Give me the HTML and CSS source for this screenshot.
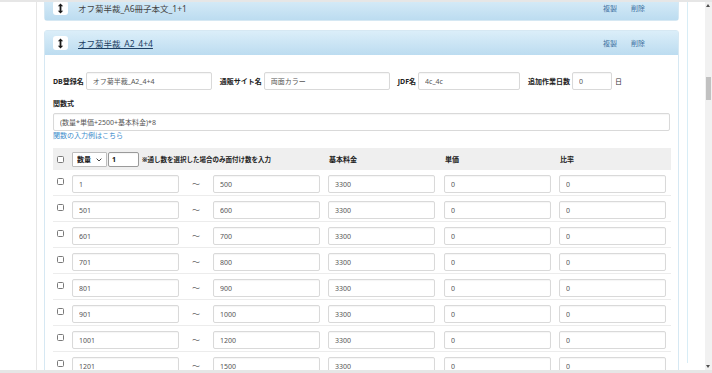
FILE: index.html
```html
<!DOCTYPE html>
<html lang="ja">
<head>
    <meta charset="UTF-8">
    <meta name="viewport" content="width=device-width, initial-scale=1.0">
    <title>面付け設定</title>
    <link rel="stylesheet" href="styles.css">
</head>
<body>
    <div class="frame">
        <div class="sidebar"></div>

        <div class="main">
            <div class="content">
                <!-- collapsed item -->
                <div class="panel">
                    <div class="panel-head">
                        <span class="drag-icon">
                            <svg width="7" height="11" viewBox="0 0 7 11"><path d="M3.5 0.5L0.8 3.2H2.6V7.8H0.8L3.5 10.5L6.2 7.8H4.4V3.2H6.2Z" fill="#1b1b1b"/></svg>
                        </span>
                        <span class="panel-title">オフ菊半裁_A6冊子本文_1+1</span>
                        <div class="panel-links">
                            <a href="#">複製</a>
                            <a href="#">削除</a>
                        </div>
                    </div>
                </div>

                <!-- open item -->
                <div class="panel">
                    <div class="panel-head">
                        <span class="drag-icon">
                            <svg width="7" height="11" viewBox="0 0 7 11"><path d="M3.5 0.5L0.8 3.2H2.6V7.8H0.8L3.5 10.5L6.2 7.8H4.4V3.2H6.2Z" fill="#1b1b1b"/></svg>
                        </span>
                        <a href="#" class="panel-title open">オフ菊半裁_A2_4+4</a>
                        <div class="panel-links">
                            <a href="#">複製</a>
                            <a href="#">削除</a>
                        </div>
                    </div>

                    <div class="panel-body">
                        <div class="field-row">
                            <label>DB登録名</label>
                            <input type="text" class="inp w-db" value="オフ菊半裁_A2_4+4">
                            <label>通販サイト名</label>
                            <input type="text" class="inp w-site" value="両面カラー">
                            <label>JDF名</label>
                            <input type="text" class="inp w-jdf" value="4c_4c">
                            <label>追加作業日数</label>
                            <input type="text" class="inp w-days" value="0">
                            <span class="unit">日</span>
                        </div>

                        <div class="formula">
                            <label>関数式</label>
                            <input type="text" class="inp w-full" value="(数量*単価+2500+基本料金)*8">
                            <a href="#" class="help-link">関数の入力例はこちら</a>
                        </div>

                        <div class="price-table">
                            <div class="t-head">
                                <div class="cell-check"><input type="checkbox" class="chk"></div>
                                <div class="head-tools">
                                    <span class="select-wrap">
                                        <select class="sel">
                                            <option>数量</option>
                                            <option>通し数</option>
                                        </select>
                                        <svg class="sel-arrow" width="6" height="4" viewBox="0 0 6 4"><path d="M0.6 0.6L3 3L5.4 0.6" fill="none" stroke="#444" stroke-width="1"/></svg>
                                    </span>
                                    <input type="text" class="inp small" value="1">
                                    <span class="note">※通し数を選択した場合のみ面付け数を入力</span>
                                </div>
                                <div class="col-label">基本料金</div>
                                <div class="col-label">単価</div>
                                <div class="col-label">比率</div>
                            </div>

                            <div id="rows"></div>
                        </div>
                    </div>
                </div>
            </div>
        </div>

        <div class="scrollbar">
            <span class="sb-up"></span>
            <span class="sb-thumb"></span>
            <span class="sb-down"></span>
        </div>
    </div>

    <script>
        // price ranges
        const ranges = [
            [1, 500], [501, 600], [601, 700], [701, 800],
            [801, 900], [901, 1000], [1001, 1200], [1201, 1500]
        ];

        const rows = document.getElementById('rows');
        ranges.forEach(function (r) {
            const row = document.createElement('div');
            row.className = 't-row';
            row.innerHTML =
                '<div class="cell-check"><input type="checkbox" class="chk"></div>' +
                '<input type="text" class="inp" value="' + r[0] + '">' +
                '<span class="tilde">～</span>' +
                '<input type="text" class="inp" value="' + r[1] + '">' +
                '<input type="text" class="inp num" value="3300">' +
                '<input type="text" class="inp num" value="0">' +
                '<input type="text" class="inp num" value="0">';
            rows.appendChild(row);
        });
    </script>
</body>
</html>
```

FILE: styles.css
```css
* {
    margin: 0;
    padding: 0;
    box-sizing: border-box;
}

body {
    font-family: "Noto Sans", "Noto Sans CJK JP", sans-serif;
    background: white;
    color: #333;
    overflow: hidden;
}

.frame {
    display: flex;
    width: 712px;
    height: 373px;
    border-top: 2px solid #e6e6e6;
    border-bottom: 3px solid #e6e6e6;
    overflow: hidden;
}

.sidebar {
    width: 37px;
    flex-shrink: 0;
    border-right: 1px solid #e6e6e6;
}

.main {
    flex: 1;
    overflow: hidden;
}

.content {
    width: 651px;
    height: 100%;
    margin-top: -7px;
    padding-left: 7px;
    border-right: 1px solid #d8edf6;
}

.panel {
    width: 635px;
    border: 1px solid #d6e8f3;
    border-radius: 3px;
    margin-bottom: 9px;
    background: white;
}

.panel-head {
    display: flex;
    align-items: center;
    height: 24px;
    padding-left: 8px;
    padding-right: 33px;
    background: linear-gradient(to bottom, #dbeef9 0%, #bcdcf0 100%);
}

.drag-icon {
    width: 15px;
    height: 14px;
    background: white;
    border-radius: 3px;
    display: flex;
    align-items: center;
    justify-content: center;
}

.panel-title {
    margin-left: 10px;
    font-size: 8.5px;
    color: #444;
}

.panel-title.open {
    color: #1d3f63;
    text-decoration: underline;
}

.panel-links {
    margin-left: auto;
    display: flex;
    gap: 14px;
}

.panel-links a {
    font-size: 7px;
    color: #3b6f9e;
    text-decoration: none;
}

.panel-body {
    padding: 17px 8px 0 8px;
}

.inp {
    height: 18px;
    border: 1px solid #d9d9d9;
    border-radius: 2px;
    box-shadow: inset 0 1px 1px rgba(0,0,0,0.04);
    padding: 0 6px;
    font-family: inherit;
    font-size: 7px;
    color: #555;
    -webkit-text-fill-color: #555;
    background: white;
    outline: none;
}

.field-row {
    display: flex;
    align-items: center;
}

.field-row label,
.formula label {
    font-size: 7px;
    font-weight: bold;
    color: #222;
    margin-right: 2px;
}

.field-row .inp {
    margin-right: 8px;
}

.w-db { width: 126px; }
.w-site { width: 126px; }
.w-jdf { width: 102px; }
.w-days { width: 40px; margin-right: 3px !important; }

.unit {
    font-size: 7px;
    color: #333;
}

.formula {
    margin-top: 9px;
    display: flex;
    flex-direction: column;
    align-items: flex-start;
}

.formula label {
    line-height: 9px;
    margin-bottom: 5px;
}

.w-full {
    width: 617px;
}

.help-link {
    font-size: 7px;
    line-height: 9px;
    color: #3d8ccc;
    text-decoration: none;
}

.price-table {
    margin-top: 8px;
    width: 618px;
}

.t-head,
.t-row {
    display: grid;
    grid-template-columns: 19px 107px 34px 107px 115px 116px 115px;
    align-items: center;
}

.t-head {
    height: 22px;
    background: #efefef;
}

.head-tools {
    grid-column: 2 / 5;
    display: flex;
    align-items: center;
}

.col-label {
    font-size: 7px;
    font-weight: bold;
    color: #222;
    padding-left: 9px;
}

.col-label:nth-child(4) {
    padding-left: 10px;
}

.cell-check {
    padding-left: 4px;
    display: flex;
}

.chk {
    appearance: none;
    width: 7px;
    height: 7px;
    border: 1px solid #7a7a7a;
    border-radius: 1.5px;
    background: white;
}

.select-wrap {
    position: relative;
    display: inline-flex;
}

.sel {
    appearance: none;
    width: 35px;
    height: 15px;
    border: 1px solid #bdbdbd;
    border-radius: 1px;
    background: white;
    font-family: inherit;
    font-size: 7px;
    font-weight: bold;
    color: #222;
    padding-left: 4px;
}

.sel-arrow {
    position: absolute;
    right: 5px;
    top: 6px;
}

.inp.small {
    width: 31px;
    height: 15px;
    margin-left: 1px;
    border-color: #9a9a9a;
    color: #111;
    -webkit-text-fill-color: #111;
    font-weight: bold;
    padding-left: 3px;
}

.note {
    font-size: 6.5px;
    font-weight: bold;
    color: #222;
    margin-left: 3px;
}

.t-row {
    height: 26px;
    border-bottom: 1px solid #ececec;
    align-items: start;
    padding-top: 5px;
}

.t-row .cell-check {
    padding-top: 3px;
}

.t-row .inp {
    width: 107px;
}

.t-row .inp.num {
    justify-self: end;
}

.tilde {
    font-size: 8px;
    color: #666;
    text-align: center;
    line-height: 18px;
}

.scrollbar {
    width: 7px;
    flex-shrink: 0;
    background: #f1f1f1;
    position: relative;
    margin-left: 17px;
}

.sb-up,
.sb-down {
    position: absolute;
    left: 1px;
    width: 0;
    height: 0;
    border-left: 2.5px solid transparent;
    border-right: 2.5px solid transparent;
}

.sb-up {
    top: 2px;
    border-bottom: 3px solid #505050;
}

.sb-down {
    bottom: 2px;
    border-top: 3px solid #505050;
}

.sb-thumb {
    position: absolute;
    top: 75px;
    left: 1px;
    width: 5px;
    height: 23px;
    background: #c1c1c1;
}
```
